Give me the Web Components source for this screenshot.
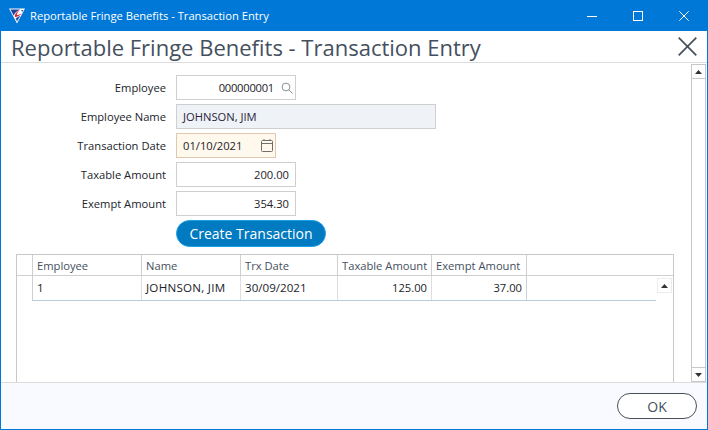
<!DOCTYPE html>
<html>
<head>
<meta charset="utf-8">
<title>Reportable Fringe Benefits - Transaction Entry</title>
<style>
html, body { margin: 0; padding: 0; background: #fff; overflow: hidden; }
body { font-family: "Open Sans", "Noto Sans", sans-serif; }
</style>
</head>
<body>
<app-window>
  <title-bar slot="title">Reportable Fringe Benefits - Transaction Entry</title-bar>
  <page-header slot="header">Reportable Fringe Benefits - Transaction Entry</page-header>

  <form-row label="Employee"><text-field width="120" align="right" icon="search" value="000000001"></text-field></form-row>
  <form-row label="Employee Name"><text-field width="260" variant="readonly" value="JOHNSON, JIM"></text-field></form-row>
  <form-row label="Transaction Date"><text-field width="100" variant="date" icon="calendar" value="01/10/2021"></text-field></form-row>
  <form-row label="Taxable Amount"><text-field width="120" align="right" value="200.00"></text-field></form-row>
  <form-row label="Exempt Amount"><text-field width="120" align="right" value="354.30"></text-field></form-row>
  <form-row><pill-button>Create Transaction</pill-button></form-row>

  <data-grid slot="grid"></data-grid>
  <scroll-bar slot="scroll"></scroll-bar>
  <ok-button slot="footer">OK</ok-button>
</app-window>

<script>
class AppWindow extends HTMLElement {
  constructor() {
    super();
    this.attachShadow({mode: 'open'}).innerHTML = `
<style>
:host { display: flex; flex-direction: column; width: 708px; height: 430px; box-sizing: border-box;
  border: 1px solid #0078d7; border-top: 0; background: #fff; }
#body { flex: 1; display: flex; min-height: 0; }
#main { flex: 1; min-width: 0; display: flex; flex-direction: column; padding: 12px 0 0 15px; }
#form { display: flex; flex-direction: column; gap: 4px; }
#grid { margin-top: 7px; margin-right: 17px; flex: 1; min-height: 0; display: flex; }
#scroll { display: flex; padding: 1px 1px 0 0; }
footer { height: 47px; flex: none; box-sizing: border-box; border-top: 1px solid #dcdcdc; background: #f9faff;
  display: flex; justify-content: flex-end; align-items: center; padding: 0 10px 0 0; }
</style>
<slot name="title"></slot>
<slot name="header"></slot>
<div id="body">
  <div id="main">
    <div id="form"><slot></slot></div>
    <div id="grid"><slot name="grid"></slot></div>
  </div>
  <div id="scroll"><slot name="scroll"></slot></div>
</div>
<footer><slot name="footer"></slot></footer>`;
  }
}

class TitleBar extends HTMLElement {
  constructor() {
    super();
    this.attachShadow({mode: 'open'}).innerHTML = `
<style>
:host { display: flex; align-items: center; height: 31px; background: #0078d7; color: #fff; margin: 0 -1px;
  padding: 0 1px 0 9px; font-size: 11.2px; box-sizing: border-box; flex: none; }
#logo { width: 16px; height: 16px; margin-right: 5px; flex: none; }
#text { flex: 1; white-space: nowrap; }
#btns { display: flex; }
.b { width: 46px; height: 31px; display: flex; align-items: center; justify-content: center; }
.b svg { display: block; }
</style>
<svg id="logo" viewBox="0 0 16 16">
  <path d="M0 .5H16L8 15.5Z" fill="#fff"/>
  <path d="M1.5 1.5H6.5L11 1.5C8 3 5.5 4.5 4.8 7.8Z" fill="#23409c"/>
  <path d="M11.5 1.2C8.5 3 6.2 5.2 5.8 8 5.7 9.4 7 9.3 8.5 8.6L13.2 5.8C11 6.2 9 7.3 7.8 6.9 7.5 5.6 9.5 3 11.5 1.2Z" fill="#d8232a"/>
  <path d="M6.6 10.2 11.6 7.6 8 13.6Z" fill="#2f52a8"/>
  <path d="M12 2H14.4L13.4 4Z" fill="#2f52a8"/>
</svg>
<span id="text"><slot></slot></span>
<div id="btns">
  <div class="b"><svg width="10" height="10" viewBox="0 0 10 10"><path d="M0 5.5H10" stroke="#fff" fill="none"/></svg></div>
  <div class="b"><svg width="10" height="10" viewBox="0 0 10 10"><rect x=".5" y=".5" width="9" height="9" stroke="#fff" fill="none"/></svg></div>
  <div class="b"><svg width="10" height="10" viewBox="0 0 10 10"><path d="M.3.3 9.7 9.7M9.7.3.3 9.7" stroke="#fff" fill="none" stroke-width="1"/></svg></div>
</div>`;
  }
}

class PageHeader extends HTMLElement {
  constructor() {
    super();
    this.attachShadow({mode: 'open'}).innerHTML = `
<style>
:host { display: flex; align-items: center; justify-content: space-between; height: 32px; box-sizing: border-box;
  border-bottom: 1px solid #dcdcdc; color: #45505e; font-size: 22px; padding: 0 10px 0 10px; flex: none; white-space: nowrap; }
svg { display: block; }
</style>
<span><slot></slot></span>
<svg width="19" height="19" viewBox="0 0 19 19"><path d="M.7.7 18.3 18.3M18.3.7.7 18.3" stroke="#46505c" stroke-width="1.7" fill="none"/></svg>`;
  }
}

class FormRow extends HTMLElement {
  constructor() {
    super();
    this.attachShadow({mode: 'open'}).innerHTML = `
<style>
:host { display: flex; align-items: center; gap: 10px; }
label { width: 150px; flex: none; text-align: right; font-size: 11.2px; color: #20242a; white-space: nowrap; }
</style>
<label></label><slot></slot>`;
  }
  connectedCallback() {
    this.shadowRoot.querySelector('label').textContent = this.getAttribute('label') || '';
  }
}

const icons = {
  search: `<svg width="12" height="12" viewBox="0 0 12 12"><circle cx="5" cy="5" r="3.9" fill="none" stroke="#8a9099"/><path d="M8 8 11.5 11.5" stroke="#8a9099" fill="none"/></svg>`,
  calendar: `<svg width="12" height="13" viewBox="0 0 12 13"><rect x=".5" y="1.5" width="11" height="11" rx="1" fill="none" stroke="#6f6f6f"/><path d="M.5 4.5H11.5M3 0V2M9 0V2" stroke="#6f6f6f" fill="none"/></svg>`
};

class TextField extends HTMLElement {
  constructor() {
    super();
    this.attachShadow({mode: 'open'}).innerHTML = `
<style>
:host { display: flex; align-items: center; height: 25px; box-sizing: border-box; border: 1px solid #cfcfcf; background: #fff;
  font-size: 11.2px; color: #1e2228; padding: 0 6px; gap: 5px; flex: none; }
:host([variant=readonly]) { background: #eff2f6; color: #2a2440; }
:host([variant=date]) { background: #fff8ec; border-color: #e2c8ae; }
:host([icon=search]) { padding-right: 0; gap: 5px; }
:host([icon=calendar]) { padding-right: 0; }
#v { flex: 1; white-space: nowrap; }
:host([align=right]) #v { text-align: right; }
:host([icon=search]) #v { letter-spacing: -.25px; }
#i { display: flex; width: 16px; justify-content: center; }
#i:empty { display: none; }
svg { display: block; }
</style>
<span id="v"></span><span id="i"></span>`;
  }
  connectedCallback() {
    this.style.width = this.getAttribute('width') + 'px';
    this.shadowRoot.querySelector('#v').textContent = this.getAttribute('value');
    const icon = this.getAttribute('icon');
    if (icon) this.shadowRoot.querySelector('#i').innerHTML = icons[icon];
  }
}

class PillButton extends HTMLElement {
  constructor() {
    super();
    this.attachShadow({mode: 'open'}).innerHTML = `
<style>
:host { display: flex; align-items: center; justify-content: center; width: 150px; height: 27px; box-sizing: border-box;
  border-radius: 13.5px; background: #007ac1; border: 1px solid #19a0e6; color: #fff; font-size: 14px; white-space: nowrap; flex: none; }
</style><slot></slot>`;
  }
}

class OkButton extends HTMLElement {
  constructor() {
    super();
    this.attachShadow({mode: 'open'}).innerHTML = `
<style>
:host { display: flex; align-items: center; justify-content: center; width: 80px; height: 26px; box-sizing: border-box;
  border-radius: 13px; border: 1px solid #4a4f57; background: #fff; color: #45505e; font-size: 14px; }
</style><slot></slot>`;
  }
}

class DataGrid extends HTMLElement {
  constructor() {
    super();
    const cols = [
      ['Employee', 109, '1', ''],
      ['Name', 99, 'JOHNSON, JIM', 'n'],
      ['Trx Date', 97, '30/09/2021', ''],
      ['Taxable Amount', 94, '125.00', 'r'],
      ['Exempt Amount', 95, '37.00', 'r']
    ];
    const tmpl = cols.map(c => c[1] + 'px').join(' ');
    this.attachShadow({mode: 'open'}).innerHTML = `
<style>
:host { display: block; flex: 1; position: relative; box-sizing: border-box; border: 1px solid #c8c8c8; border-bottom: 0; font-size: 11.2px; }
#head { display: grid; grid-template-columns: 15px ${tmpl} 1fr; height: 21px; box-sizing: border-box; border-bottom: 1px solid #cfcfcf; color: #45505e; }
#head div { border-left: 1px solid #cfcfcf; padding: 0 0 0 4px; display: flex; align-items: center; white-space: nowrap; }
#head div:first-child { border-left: 0; }
#row { display: grid; grid-template-columns: ${tmpl} 1fr; margin: 0 17px 0 15px; height: 25px; box-sizing: border-box; border-bottom: 1px solid #b4cadd; color: #20242a; font-size: 11.6px; }
#row div { border-left: 1px solid #dedede; padding: 0 0 1px 4px; display: flex; align-items: center; white-space: nowrap; }
#row div:first-child { border-left: 1px solid #cfcfcf; }
#row div.n { letter-spacing: .25px; }
#row div.r { justify-content: flex-end; padding: 0 4px 1px 0; font-size: 11.2px; }
#row div.l { border-left-color: #c3d3e2; }
#up { position: absolute; right: 1px; top: 23px; width: 15px; height: 15px; box-sizing: border-box; border: 1px solid #ececec;
  display: flex; align-items: center; justify-content: center; background: #fff; }
svg { display: block; }
</style>
<div id="head"><div></div>${cols.map(c => `<div>${c[0]}</div>`).join('')}<div></div></div>
<div id="row">${cols.map(c => `<div class="${c[3]}">${c[2]}</div>`).join('')}<div class="l"></div></div>
<div id="up"><svg width="7" height="4" viewBox="0 0 7 4"><path d="M3.5 0 7 4H0Z" fill="#333"/></svg></div>`;
  }
}

class ScrollBar extends HTMLElement {
  constructor() {
    super();
    this.attachShadow({mode: 'open'}).innerHTML = `
<style>
:host { display: flex; flex-direction: column; justify-content: space-between; width: 15px; box-sizing: border-box;
  border-left: 1px solid #c8c8c8; border-right: 1px solid #c8c8c8; }
.b { height: 15px; margin: 0 -1px; box-sizing: border-box; border: 1px solid #c8c8c8; display: flex; align-items: center; justify-content: center; background: #fff; }
svg { display: block; }
</style>
<div class="b"><svg width="7" height="4" viewBox="0 0 7 4"><path d="M3.5 0 7 4H0Z" fill="#333"/></svg></div>
<div class="b"><svg width="7" height="4" viewBox="0 0 7 4"><path d="M0 0H7L3.5 4Z" fill="#333"/></svg></div>`;
  }
}

customElements.define('app-window', AppWindow);
customElements.define('title-bar', TitleBar);
customElements.define('page-header', PageHeader);
customElements.define('form-row', FormRow);
customElements.define('text-field', TextField);
customElements.define('pill-button', PillButton);
customElements.define('ok-button', OkButton);
customElements.define('data-grid', DataGrid);
customElements.define('scroll-bar', ScrollBar);
</script>
</body>
</html>
